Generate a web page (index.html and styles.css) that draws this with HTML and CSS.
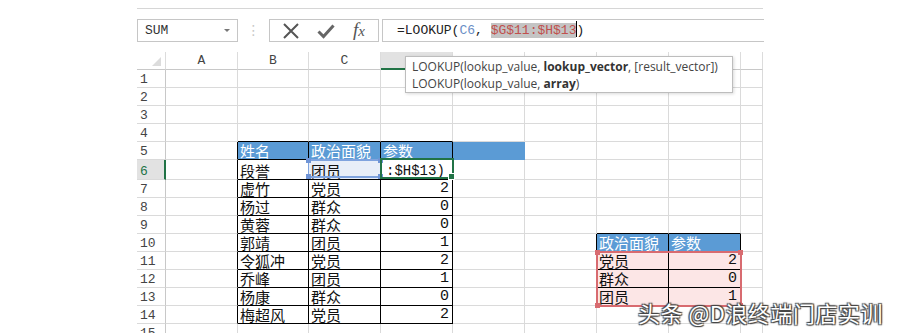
FILE: index.html
```html
<!DOCTYPE html>
<html lang="zh">
<head>
    <meta charset="UTF-8">
    <title>LOOKUP</title>
    <link rel="stylesheet" href="styles.css">
</head>
<body>
    <div class="app">
        <div class="topline"></div>
        <div class="bar">
            <div class="namebox"><span>SUM</span><span class="arrow"></span></div>
            <div class="dots">⋮</div>
            <div class="fxbox">
                <svg width="16" height="16" viewBox="0 0 16 16"><path d="M1 1 L15 15 M15 1 L1 15" stroke="#555" stroke-width="2" fill="none"/></svg>
                <svg width="18" height="16" viewBox="0 0 18 16"><path d="M1.5 8.5 L6.5 13.5 L16.5 2.5" stroke="#666" stroke-width="3" fill="none"/></svg>
                <span class="fx"><i>f</i><i class="x">x</i></span>
            </div>
            <div class="formula">=LOOKUP(<span class="ref-c">C6</span>, <span class="ref-r">$G$11:$H$13</span><span class="caret"></span>)</div>
        </div>

        <table class="sheet">
            <colgroup>
                <col style="width:29px"><col style="width:72px"><col style="width:71px"><col style="width:72px"><col style="width:72px"><col style="width:72px"><col style="width:72px"><col style="width:72px"><col style="width:72px"><col style="width:22px">
            </colgroup>
            <tr class="head">
                <!-- D..H letters sit under the function tooltip -->
                <th class="corner"><span class="tri"></span></th><th>A</th><th>B</th><th>C</th><th class="on"></th><th></th><th></th><th></th><th></th><th></th>
            </tr>
            <tr><td class="rh">1</td><td></td><td></td><td></td><td></td><td></td><td></td><td></td><td></td><td></td></tr>
            <tr><td class="rh">2</td><td></td><td></td><td></td><td></td><td></td><td></td><td></td><td></td><td></td></tr>
            <tr><td class="rh">3</td><td></td><td></td><td></td><td></td><td></td><td></td><td></td><td></td><td></td></tr>
            <tr><td class="rh">4</td><td></td><td class="t"></td><td class="t"></td><td class="t"></td><td></td><td></td><td></td><td></td><td></td></tr>
            <tr><td class="rh">5</td><td class="l"></td><td class="b hd">姓名</td><td class="b hd">政治面貌</td><td class="b hd">参数</td><td class="hd fill"></td><td></td><td></td><td></td><td></td></tr>
            <tr><td class="rh on">6</td><td class="l"></td><td class="b">段誉</td><td class="b selc">团员<span class="ref-box"><i class="h tl"></i><i class="h tr"></i><i class="h bl"></i><i class="h br"></i></span></td><td class="b act"><span class="edit">:$H$13)</span><span class="act-box"><i class="h br"></i></span></td><td></td><td></td><td></td><td></td><td></td></tr>
            <tr><td class="rh">7</td><td class="l"></td><td class="b">虚竹</td><td class="b">党员</td><td class="b num">2</td><td></td><td></td><td></td><td></td><td></td></tr>
            <tr><td class="rh">8</td><td class="l"></td><td class="b">杨过</td><td class="b">群众</td><td class="b num">0</td><td></td><td></td><td></td><td></td><td></td></tr>
            <tr><td class="rh">9</td><td class="l"></td><td class="b">黄蓉</td><td class="b">群众</td><td class="b num">0</td><td></td><td></td><td class="t"></td><td class="t"></td><td></td></tr>
            <tr><td class="rh">10</td><td class="l"></td><td class="b">郭靖</td><td class="b">团员</td><td class="b num">1</td><td></td><td class="l"></td><td class="b hd">政治面貌</td><td class="b hd">参数</td><td></td></tr>
            <tr><td class="rh">11</td><td class="l"></td><td class="b">令狐冲</td><td class="b">党员</td><td class="b num">2</td><td></td><td class="l"></td><td class="b pk">党员<span class="range-box"><i class="h tl"></i><i class="h tr"></i><i class="h bl"></i><i class="h br"></i></span></td><td class="b pk num">2</td><td></td></tr>
            <tr><td class="rh">12</td><td class="l"></td><td class="b">乔峰</td><td class="b">团员</td><td class="b num">1</td><td></td><td class="l"></td><td class="b pk">群众</td><td class="b pk num">0</td><td></td></tr>
            <tr><td class="rh">13</td><td class="l"></td><td class="b">杨康</td><td class="b">群众</td><td class="b num">0</td><td></td><td class="l"></td><td class="b pk">团员</td><td class="b pk num">1</td><td></td></tr>
            <tr><td class="rh">14</td><td class="l"></td><td class="b">梅超风</td><td class="b">党员</td><td class="b num">2</td><td></td><td></td><td></td><td></td><td></td></tr>
            <tr><td class="rh">15</td><td></td><td></td><td></td><td></td><td></td><td></td><td></td><td></td><td></td></tr>
        </table>

        <div class="tip">
            <div>LOOKUP(lookup_value, <b>lookup_vector</b>, [result_vector])</div>
            <div>LOOKUP(lookup_value, <b>array</b>)</div>
        </div>
    </div>
    <div class="mark">头条 @D浪终端门店实训</div>
</body>
</html>
```

FILE: styles.css
```css
body {
    margin: 0;
    height: 333px;
    overflow: hidden;
    background: #fff;
    font-family: "Noto Sans CJK SC", sans-serif;
}

.app {
    position: relative;
    padding: 8px 0 0 137px;
}

.topline {
    width: 626px;
    border-top: 1px solid #d6d6d6;
}

/* formula bar */
.bar {
    display: flex;
    margin-top: 10px;
    height: 23px;
}

.namebox {
    box-sizing: border-box;
    width: 101px;
    border: 1px solid #c6c6c6;
    display: flex;
    align-items: center;
    justify-content: space-between;
    padding: 0 7px 0 7px;
    font: 13px "Liberation Mono", monospace;
    color: #333;
}

.arrow {
    width: 0;
    height: 0;
    border-left: 3px solid transparent;
    border-right: 3px solid transparent;
    border-top: 3px solid #777;
}

.dots {
    width: 31px;
    text-align: center;
    color: #c8c8c8;
    font: 14px "DejaVu Sans", sans-serif;
    line-height: 23px;
}

.fxbox {
    box-sizing: border-box;
    width: 110px;
    border: 1px solid #c6c6c6;
    display: flex;
    align-items: center;
    justify-content: space-around;
    padding: 0 4px;
}

.fx {
    font: italic 19px "Liberation Serif", serif;
    color: #555;
    margin-top: -2px;
}

.fx .x {
    font-size: 15px;
}

.formula {
    box-sizing: border-box;
    margin-left: 3px;
    width: 382px;
    border: 1px solid #c6c6c6;
    border-right: none;
    padding-left: 14px;
    font: 13px "Liberation Mono", monospace;
    line-height: 21px;
    color: #222;
}

.ref-c {
    color: #6a8ec6;
}

.ref-r {
    color: #c0504d;
    background: #c4c4c4;
}

.caret {
    display: inline-block;
    width: 1px;
    height: 16px;
    background: #000;
    vertical-align: -3px;
    margin-right: -1px;
}

/* sheet */
.sheet {
    margin-top: 10px;
    border-collapse: separate;
    border-spacing: 0;
    table-layout: fixed;
    width: 626px;
}

.sheet th,
.sheet td {
    box-sizing: border-box;
    height: 18px;
    padding: 0 2px;
    border-right: 1px solid #dadada;
    border-bottom: 1px solid #dadada;
    white-space: nowrap;
    overflow: visible;
}

.sheet th {
    font: normal 13px "Liberation Mono", monospace;
    color: #444;
    border-bottom-color: #c8c8c8;
    border-right-color: #dcdcdc;
}

.sheet th.on {
    background: #e2e2e2;
    border-bottom: 2px solid #217346;
}

.corner {
    position: relative;
}

.tri {
    position: absolute;
    right: 4px;
    bottom: 3px;
    width: 0;
    height: 0;
    border-left: 9px solid transparent;
    border-bottom: 9px solid #dcdcdc;
}

.sheet td {
    font-size: 15px;
    line-height: 17px;
    color: #111;
    vertical-align: bottom;
}

.sheet td.rh {
    font: 13px "Liberation Mono", monospace;
    color: #444;
    padding-left: 3px;
    border-right-color: #c8c8c8;
}

.sheet td.rh.on {
    background: #e2e2e2;
    color: #217346;
    border-right: 2px solid #217346;
}

.sheet td.l {
    border-right-color: #000;
}

.sheet td.t {
    border-bottom-color: #000;
}

.sheet td.b {
    border-right-color: #000;
    border-bottom-color: #000;
}

.sheet td.hd {
    background: #5b9bd5;
    color: #fff;
}

.sheet td.fill {
    border-right-color: #5b9bd5;
    border-bottom-color: #5b9bd5;
}

.sheet td.num {
    text-align: right;
    font-family: "Liberation Mono", monospace;
    font-size: 15px;
    padding-right: 3px;
}

.sheet td.pk {
    background: #fce6e6;
}

.selc,
.act,
.pk {
    position: relative;
}

.selc {
    background: #e8eef8;
}

.edit {
    font: 14px "Liberation Mono", monospace;
    padding-left: 3px;
}

/* selection frames */
.ref-box,
.act-box,
.range-box {
    position: absolute;
    box-sizing: border-box;
}

.ref-box {
    left: -1px;
    top: -1px;
    width: 73px;
    height: 19px;
    border: 1px solid #7fa3de;
    border-top-width: 2px;
    border-bottom-width: 2px;
}

.act-box {
    left: -1px;
    top: -2px;
    width: 74px;
    height: 21px;
    border: 2px solid #217346;
}

.range-box {
    left: -1px;
    top: -1px;
    width: 146px;
    height: 56px;
    border: 2px solid #d86b70;
    z-index: 2;
}

.h {
    position: absolute;
    width: 5px;
    height: 5px;
}

.ref-box .h { background: #6f94d6; }
.act-box .h { background: #217346; border: 1px solid #fff; }
.range-box .h { background: #d86b70; }

.h.tl { left: -3px; top: -3px; }
.h.tr { right: -3px; top: -3px; }
.h.bl { left: -3px; bottom: -3px; }
.h.br { right: -3px; bottom: -3px; }

/* function tooltip */
.tip {
    position: absolute;
    left: 405px;
    top: 56px;
    box-sizing: border-box;
    width: 328px;
    height: 37px;
    padding: 1px 0 0 6px;
    background: #fff;
    border: 1px solid #bdbdbd;
    box-shadow: 1px 1px 3px rgba(0, 0, 0, 0.15);
    font: 12px "Open Sans", sans-serif;
    line-height: 17px;
    color: #444;
}

.tip b {
    color: #333;
}

/* watermark */
.mark {
    position: absolute;
    left: 638px;
    top: 296px;
    font-size: 22px;
    color: #fff;
    letter-spacing: 0.5px;
    text-shadow: 1px 1px 1px #444, -1px -1px 1px #444, 1px -1px 1px #444, -1px 1px 1px #444;
    z-index: 3;
}
```
